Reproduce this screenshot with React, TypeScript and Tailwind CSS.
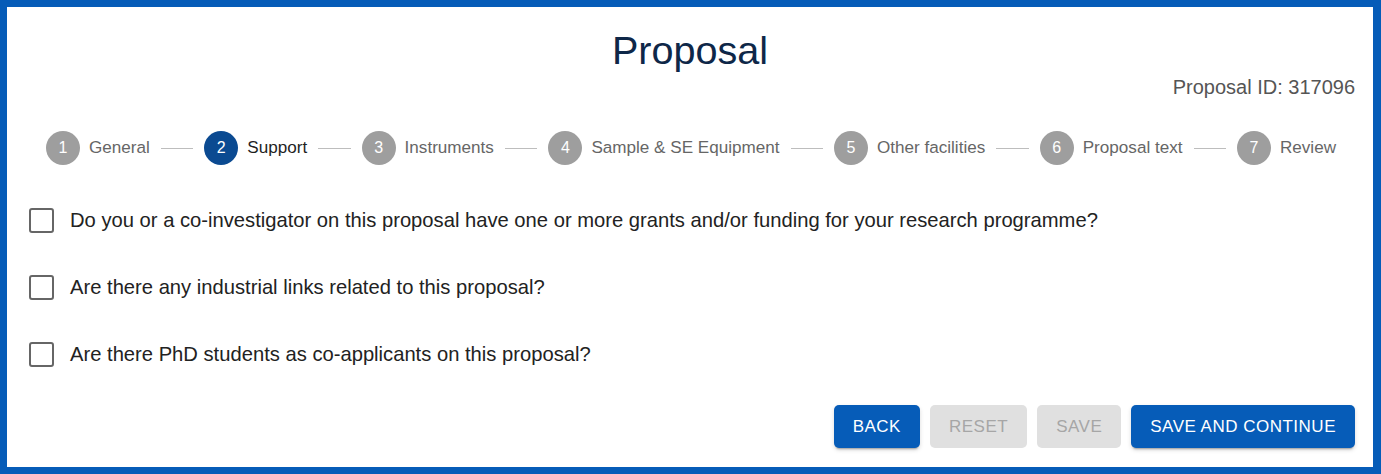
import React from 'react';

const steps = [
  'General',
  'Support',
  'Instruments',
  'Sample & SE Equipment',
  'Other facilities',
  'Proposal text',
  'Review',
];

const questions = [
  'Do you or a co-investigator on this proposal have one or more grants and/or funding for your research programme?',
  'Are there any industrial links related to this proposal?',
  'Are there PhD students as co-applicants on this proposal?',
];

const activeStep = 1;

const App: React.FC = () => {
  return (
    <div className="w-[1381px] h-[474px] bg-[#065cb8] pt-[7px] pl-[7px] pr-[8px] pb-[7px] font-['Liberation_Sans',Arial,sans-serif]">
      <div className="h-full bg-white flex flex-col">
        {/* Title */}
        <h1 className="mt-[21px] text-center text-[39.6px] leading-[45px] text-[#0e2748]">Proposal</h1>
        <div className="mt-[2px] h-[24px] pr-[18px] text-right text-[20px] leading-[24px] text-[#555]">
          Proposal ID: 317096
        </div>

        {/* Stepper */}
        <div className="mt-[32px] flex items-center pl-[39px] pr-[37px]">
          {steps.map((label, i) => (
            <React.Fragment key={label}>
              <div className="flex items-center shrink-0">
                <div
                  className={`w-[34px] h-[34px] rounded-full flex items-center justify-center text-white text-[16px] ${
                    i === activeStep ? 'bg-[#0b4a91]' : 'bg-[#9e9e9e]'
                  }`}
                >
                  {i + 1}
                </div>
                <span
                  className={`ml-[9px] text-[17.1px] ${i === activeStep ? 'text-[#1f1f1f]' : 'text-[#666]'}`}
                >
                  {label}
                </span>
              </div>
              {i < steps.length - 1 && <div className="flex-1 mx-[11px] h-px bg-[#bdbdbd]" />}
            </React.Fragment>
          ))}
        </div>

        {/* Questions */}
        <div className="mt-[33px] flex flex-col gap-[23px]">
          {questions.map(q => (
            <label key={q} className="h-[44px] flex items-center pl-[22px] cursor-pointer">
              <span className="w-[25px] h-[25px] border-[2.5px] border-[#666] rounded-[3px] shrink-0" />
              <span className="ml-[16px] text-[20.2px] text-[#222]">{q}</span>
            </label>
          ))}
        </div>

        {/* Actions */}
        <div className="mt-[29px] flex justify-end gap-[10px] pr-[18px]">
          <button className="h-[43px] px-[19px] rounded-[5px] bg-[#065cb8] text-white text-[17px] tracking-[0.5px] shadow-[0_3px_2px_-2px_rgba(0,0,0,0.3),0_2px_4px_rgba(0,0,0,0.15)]">
            BACK
          </button>
          <button className="h-[43px] px-[19px] rounded-[5px] bg-[#e0e0e0] text-[#a6a6a6] text-[17px] tracking-[0.5px]">
            RESET
          </button>
          <button className="h-[43px] px-[19px] rounded-[5px] bg-[#e0e0e0] text-[#a6a6a6] text-[17px] tracking-[0.5px]">
            SAVE
          </button>
          <button className="h-[43px] px-[19px] rounded-[5px] bg-[#065cb8] text-white text-[17px] tracking-[0.5px] shadow-[0_3px_2px_-2px_rgba(0,0,0,0.3),0_2px_4px_rgba(0,0,0,0.15)]">
            SAVE AND CONTINUE
          </button>
        </div>
      </div>
    </div>
  );
};

export default App;
